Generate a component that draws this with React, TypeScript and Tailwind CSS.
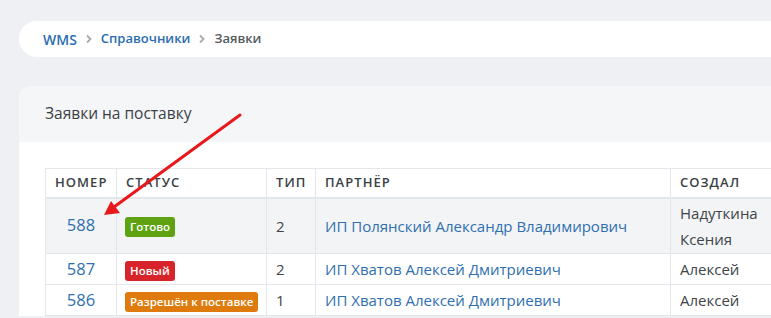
const rows = [
  { id: "588", status: "Готово", color: "bg-[#5ea211]", type: "2", partner: "ИП Полянский Александр Владимирович", author: ["Надуткина", "Ксения"], hl: true },
  { id: "587", status: "Новый", color: "bg-[#d6242a]", type: "2", partner: "ИП Хватов Алексей Дмитриевич", author: ["Алексей"], hl: false },
  { id: "586", status: "Разрешён к поставке", color: "bg-[#de7b0c]", type: "1", partner: "ИП Хватов Алексей Дмитриевич", author: ["Алексей"], hl: false },
];

const Chevron = () => (
  <svg width="8" height="10" viewBox="0 0 8 10" className="mx-[8px]">
    <path d="M2 1.5 L5.5 5 L2 8.5" fill="none" stroke="#a9acb1" strokeWidth="1.8" />
  </svg>
);

export default function App() {
  return (
    <div className="relative w-[771px] h-[318px] overflow-hidden bg-[#eff0f4] pl-[19px] pt-[21px] font-['Open_Sans',sans-serif]">
      <nav className="flex h-[36px] items-center rounded-l-full bg-white pl-[24px] text-[13px] font-semibold">
        <span className="text-[14px] text-[#2a6db1]">WMS</span>
        <Chevron />
        <span className="text-[#2a6db1]">Справочники</span>
        <Chevron />
        <span className="text-[#555a60]">Заявки</span>
      </nav>

      <section className="mt-[29px] rounded-tl-xl bg-white">
        <div className="flex h-[56px] items-center rounded-tl-xl bg-[#f5f6f8] pl-[26px] text-[15.5px] text-[#3b4046]">
          Заявки на поставку
        </div>
        <div className="pl-[26px] pt-[26px]">
          <table className="w-[760px] table-fixed border-collapse text-[15px] text-[#3f4449]">
            <colgroup>
              <col className="w-[71px]" />
              <col className="w-[150px]" />
              <col className="w-[49px]" />
              <col className="w-[355px]" />
              <col className="w-[135px]" />
            </colgroup>
            <thead>
              <tr className="h-[29px] border-b-2 border-[#e3e6ea] text-left text-[13px] font-semibold uppercase tracking-[0.08em] text-[#3a3f45]">
                <th className="border border-[#e3e6ea] px-[9px] text-center font-semibold">Номер</th>
                <th className="border border-[#e3e6ea] px-[9px] font-semibold">Статус</th>
                <th className="border border-[#e3e6ea] px-[9px] font-semibold">Тип</th>
                <th className="border border-[#e3e6ea] px-[9px] font-semibold">Партнёр</th>
                <th className="border border-[#e3e6ea] px-[9px] font-semibold">Создал</th>
              </tr>
            </thead>
            <tbody>
              {rows.map((r) => (
                <tr key={r.id} className={r.hl ? "h-[56px] bg-[#f3f4f6]" : "h-[31px]"}>
                  <td className="border border-[#e3e6ea] px-[9px] text-center text-[16.5px] text-[#2f6fb0]">{r.id}</td>
                  <td className="border border-[#e3e6ea] pl-[8px] pr-0">
                    <span className={`${r.color} inline-block whitespace-nowrap rounded-[3px] px-[5px] text-[11.5px] font-semibold leading-[20px] text-white`}>
                      {r.status}
                    </span>
                  </td>
                  <td className="border border-[#e3e6ea] px-[9px]">{r.type}</td>
                  <td className="border border-[#e3e6ea] px-[9px] text-[#2f6fb0]">{r.partner}</td>
                  <td className="border border-[#e3e6ea] px-[9px] leading-[26px]">
                    {r.author.map((a) => (
                      <div key={a}>{a}</div>
                    ))}
                  </td>
                </tr>
              ))}
            </tbody>
          </table>
        </div>
      </section>

      <svg className="pointer-events-none absolute left-0 top-0" width="771" height="318">
        <line x1="240" y1="115" x2="114" y2="207" stroke="#e8181c" strokeWidth="3" strokeLinecap="round" />
        <polygon points="104,215 111,201 120,213" fill="#e8181c" />
      </svg>
    </div>
  );
}
